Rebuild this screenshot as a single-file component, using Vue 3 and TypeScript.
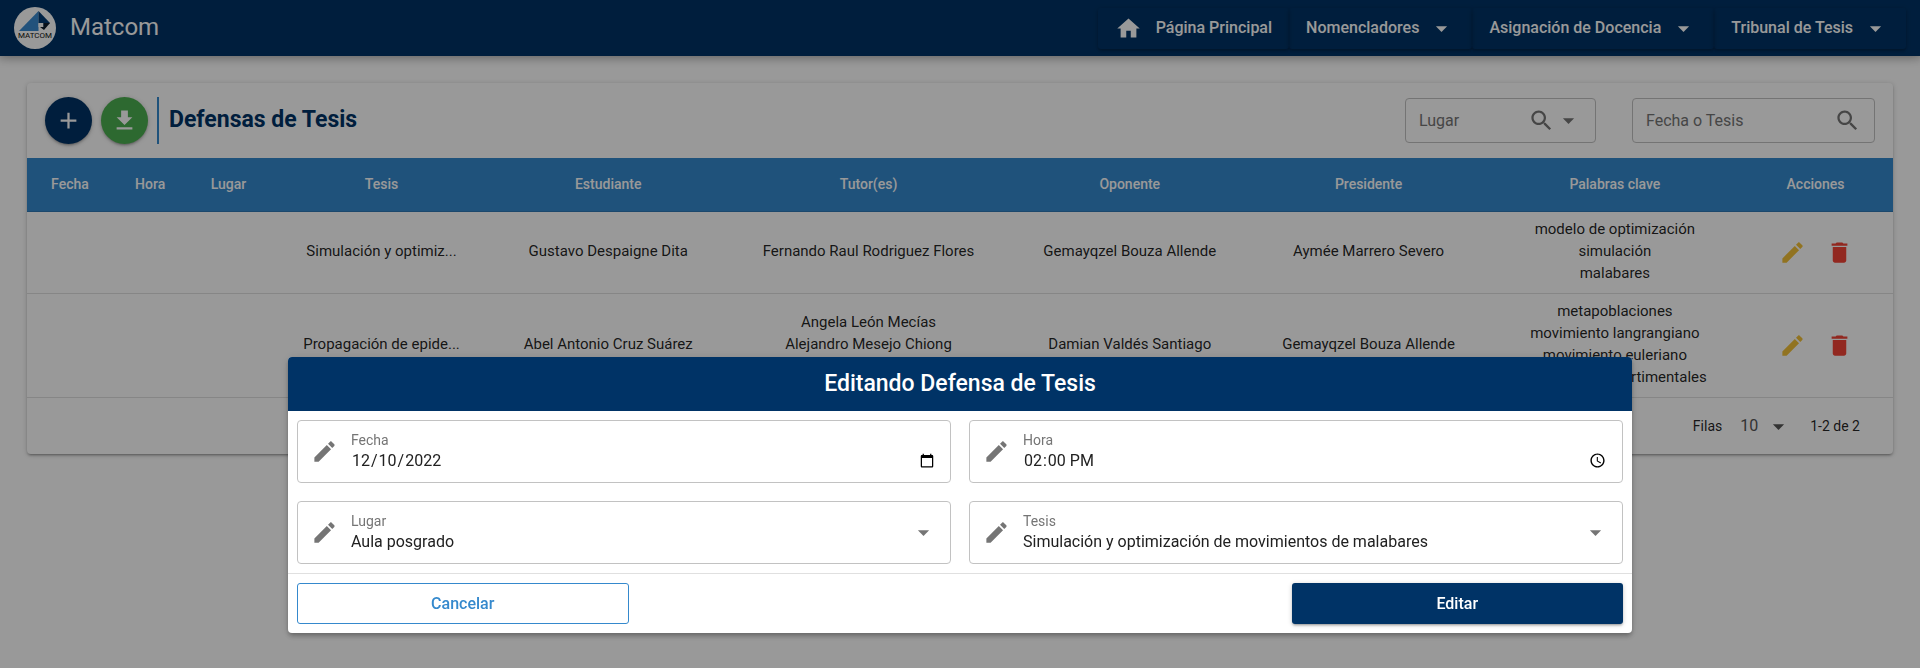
<script setup lang="ts">
import { ref } from 'vue'

interface Defensa {
  fecha: string
  hora: string
  lugar: string
  tesis: string
  estudiante: string
  tutores: string[]
  oponente: string
  presidente: string
  claves: string[]
}

const menus = ['Nomencladores', 'Asignación de Docencia', 'Tribunal de Tesis']

const columnas = [
  { nombre: 'Fecha', clase: 'c-fecha' },
  { nombre: 'Hora', clase: 'c-hora' },
  { nombre: 'Lugar', clase: 'c-lugar' },
  { nombre: 'Tesis', clase: 'c-tesis' },
  { nombre: 'Estudiante', clase: 'c-estudiante' },
  { nombre: 'Tutor(es)', clase: 'c-tutores' },
  { nombre: 'Oponente', clase: 'c-oponente' },
  { nombre: 'Presidente', clase: 'c-presidente' },
  { nombre: 'Palabras clave', clase: 'c-claves' },
  { nombre: 'Acciones', clase: 'c-acciones' },
]

const defensas: Defensa[] = [
  {
    fecha: '',
    hora: '',
    lugar: '',
    tesis: 'Simulación y optimiz...',
    estudiante: 'Gustavo Despaigne Dita',
    tutores: ['Fernando Raul Rodriguez Flores'],
    oponente: 'Gemayqzel Bouza Allende',
    presidente: 'Aymée Marrero Severo',
    claves: ['modelo de optimización', 'simulación', 'malabares'],
  },
  {
    fecha: '',
    hora: '',
    lugar: '',
    tesis: 'Propagación de epide...',
    estudiante: 'Abel Antonio Cruz Suárez',
    tutores: ['Angela León Mecías', 'Alejandro Mesejo Chiong', ''],
    oponente: 'Damian Valdés Santiago',
    presidente: 'Gemayqzel Bouza Allende',
    claves: ['metapoblaciones', 'movimiento langrangiano', 'movimiento euleriano', 'modelos compartimentales'],
  },
]

const filtroLugar = ref('')
const busqueda = ref('')
const filas = ref('10')
const fecha = ref('2022-12-10')
const hora = ref('14:00')
const lugar = ref('Aula posgrado')
const tesis = ref('Simulación y optimización de movimientos de malabares')

const lapiz =
  'M3 17.25V21h3.75L17.81 9.94l-3.75-3.75L3 17.25zM20.71 7.04c.39-.39.39-1.02 0-1.41l-2.34-2.34c-.39-.39-1.02-.39-1.41 0l-1.83 1.83 3.75 3.75 1.83-1.83z'
const papelera = 'M6 19c0 1.1.9 2 2 2h8c1.1 0 2-.9 2-2V7H6v12zM19 4h-3.5l-1-1h-5l-1 1H5v2h14V4z'
const flecha = 'M7 10l5 5 5-5z'
const lupa =
  'M15.5 14h-.79l-.28-.27C15.41 12.59 16 11.11 16 9.5 16 5.91 13.09 3 9.5 3S3 5.91 3 9.5 5.91 16 9.5 16c1.61 0 3.09-.59 4.23-1.57l.27.28v.79l5 4.99L20.49 19l-4.99-5zm-6 0C7.01 14 5 11.99 5 9.5S7.01 5 9.5 5 14 7.01 14 9.5 11.99 14 9.5 14z'
</script>

<template>
  <div class="page">
    <header class="topbar">
      <svg class="logo" viewBox="0 0 42 42" role="img" aria-label="Matcom">
        <circle cx="21" cy="21" r="21" fill="#fff" />
        <path d="M5 24L24.5 4v20z" fill="#3a89cf" />
        <path d="M24.5 4L36 16l-6.500 4-5-4z" fill="#003a73" />
        <path d="M24.5 16h5v4h-5z" fill="#fff" />
        <path d="M29.5 16H36l-6 7-4-3h3.500z" fill="#0a1a2c" />
        <text x="21" y="31" text-anchor="middle" class="logo-text">MATCOM</text>
      </svg>
      <span class="brand">Matcom</span>
      <nav class="nav">
        <a class="nav-item" href="#">
          <svg class="icon" viewBox="0 0 24 24"><path d="M10 20v-6h4v6h5v-8h3L12 3 2 12h3v8z" /></svg>
          <span class="nav-home">Página Principal</span>
        </a>
        <button v-for="m in menus" :key="m" type="button" class="nav-item">
          {{ m }}
          <svg class="icon nav-arrow" viewBox="0 0 24 24"><path :d="flecha" /></svg>
        </button>
      </nav>
    </header>

    <main class="card">
      <div class="card-top">
        <button type="button" class="round add" aria-label="Adicionar">
          <svg class="icon" viewBox="0 0 24 24"><path d="M19 13h-6v6h-2v-6H5v-2h6V5h2v6h6v2z" /></svg>
        </button>
        <button type="button" class="round download" aria-label="Descargar">
          <svg class="icon" viewBox="0 0 24 24"><path d="M19 9h-4V3H9v6H5l7 7 7-7zM5 18v2h14v-2H5z" /></svg>
        </button>
        <h1 class="title">Defensas de Tesis</h1>
        <div class="filters">
          <div class="filter filter-place">
            <select v-model="filtroLugar" aria-label="Lugar">
              <option value="">Lugar</option>
              <option>Aula posgrado</option>
            </select>
            <svg class="icon" viewBox="0 0 24 24"><path :d="lupa" /></svg>
            <svg class="icon" viewBox="0 0 24 24"><path :d="flecha" /></svg>
          </div>
          <div class="filter filter-text">
            <input v-model="busqueda" type="text" placeholder="Fecha o Tesis" aria-label="Fecha o Tesis" />
            <svg class="icon" viewBox="0 0 24 24"><path :d="lupa" /></svg>
          </div>
        </div>
      </div>

      <table class="table">
        <colgroup>
          <col v-for="c in columnas" :key="c.nombre" :class="c.clase" />
        </colgroup>
        <thead>
          <tr>
            <th v-for="c in columnas" :key="c.nombre" scope="col">{{ c.nombre }}</th>
          </tr>
        </thead>
        <tbody>
          <tr v-for="d in defensas" :key="d.tesis">
            <td>{{ d.fecha }}</td>
            <td>{{ d.hora }}</td>
            <td>{{ d.lugar }}</td>
            <td>{{ d.tesis }}</td>
            <td>{{ d.estudiante }}</td>
            <td><div v-for="t in d.tutores" :key="t" class="line">{{ t }}</div></td>
            <td>{{ d.oponente }}</td>
            <td>{{ d.presidente }}</td>
            <td><div v-for="k in d.claves" :key="k" class="line">{{ k }}</div></td>
            <td>
              <div class="actions">
                <button type="button" class="action edit" aria-label="Editar">
                  <svg class="icon" viewBox="0 0 24 24"><path :d="lapiz" /></svg>
                </button>
                <button type="button" class="action remove" aria-label="Eliminar">
                  <svg class="icon" viewBox="0 0 24 24"><path :d="papelera" /></svg>
                </button>
              </div>
            </td>
          </tr>
        </tbody>
      </table>

      <div class="pager">
        <label for="filas">Filas</label>
        <div class="rows">
          <select id="filas" v-model="filas">
            <option>10</option>
            <option>20</option>
          </select>
          <svg class="icon" viewBox="0 0 24 24"><path :d="flecha" /></svg>
        </div>
        <span>1-2 de 2</span>
      </div>
    </main>

    <div class="backdrop">
      <form class="dialog" role="dialog" aria-labelledby="dialog-title" @submit.prevent>
        <h2 id="dialog-title" class="dialog-title">Editando Defensa de Tesis</h2>
        <div class="fields">
          <div class="field">
            <svg class="icon" viewBox="0 0 24 24"><path :d="lapiz" /></svg>
            <div class="control">
              <label for="f-fecha">Fecha</label>
              <input id="f-fecha" v-model="fecha" type="date" />
            </div>
          </div>
          <div class="field">
            <svg class="icon" viewBox="0 0 24 24"><path :d="lapiz" /></svg>
            <div class="control">
              <label for="f-hora">Hora</label>
              <input id="f-hora" v-model="hora" type="time" />
            </div>
          </div>
          <div class="field">
            <svg class="icon" viewBox="0 0 24 24"><path :d="lapiz" /></svg>
            <div class="control">
              <label for="f-lugar">Lugar</label>
              <select id="f-lugar" v-model="lugar">
                <option>Aula posgrado</option>
              </select>
            </div>
            <svg class="icon" viewBox="0 0 24 24"><path :d="flecha" /></svg>
          </div>
          <div class="field">
            <svg class="icon" viewBox="0 0 24 24"><path :d="lapiz" /></svg>
            <div class="control">
              <label for="f-tesis">Tesis</label>
              <select id="f-tesis" v-model="tesis">
                <option>Simulación y optimización de movimientos de malabares</option>
              </select>
            </div>
            <svg class="icon" viewBox="0 0 24 24"><path :d="flecha" /></svg>
          </div>
        </div>
        <div class="dialog-actions">
          <button type="button" class="btn cancel">Cancelar</button>
          <button type="submit" class="btn submit">Editar</button>
        </div>
      </form>
    </div>
  </div>
</template>

<style>
body {
  margin: 0;
  background: #fff;
}
</style>

<style scoped>
* {
  box-sizing: border-box;
}
.page {
  min-height: 100vh;
  font-family: Roboto, "Liberation Sans", sans-serif;
  font-size: 15px;
  line-height: 22px;
  color: rgba(0, 0, 0, 0.87);
}
button,
input,
select {
  font: inherit;
  color: inherit;
  border: 0;
  margin: 0;
  padding: 0;
  background: transparent;
  outline: none;
  border-radius: 0;
}
button {
  cursor: pointer;
}
select {
  appearance: none;
  min-width: 0;
}
.icon {
  width: 27px;
  height: 27px;
  flex: none;
  fill: currentColor;
  pointer-events: none;
}

.topbar {
  display: flex;
  align-items: center;
  height: 56px;
  padding: 0 14px;
  color: #fff;
  background: #036;
  box-shadow: 0 0 10px 2px rgba(0, 0, 0, 0.2), 0 0 10px rgba(0, 0, 0, 0.24);
}
.logo {
  width: 42px;
  height: 42px;
}
.logo-text {
  font-size: 8px;
  fill: #111;
}
.brand {
  margin-left: 14px;
  padding-bottom: 2px;
  font-size: 24px;
  line-height: 28px;
}
.nav {
  display: flex;
  margin-left: auto;
}
.nav-item {
  display: flex;
  align-items: center;
  height: 41px;
  padding: 0 17px;
  font-size: 16px;
  font-weight: 500;
  color: #fff;
  text-decoration: none;
  border-radius: 3px;
  box-shadow: 0 1px 5px rgba(0, 0, 0, 0.2), 0 2px 2px rgba(0, 0, 0, 0.14);
}
.nav-home {
  margin-left: 14px;
}
.nav-arrow {
  margin-left: 9px;
}

.card {
  margin: 27px;
  border-radius: 4px;
  background: #fff;
  box-shadow: 0 1px 5px rgba(0, 0, 0, 0.2), 0 2px 2px rgba(0, 0, 0, 0.14), 0 3px 1px -2px rgba(0, 0, 0, 0.12);
}
.card-top {
  display: flex;
  align-items: center;
  padding: 14px 18px;
}
.round {
  display: flex;
  align-items: center;
  justify-content: center;
  width: 47px;
  height: 47px;
  margin-right: 9px;
  border-radius: 50%;
  color: #fff;
  box-shadow: 0 1px 5px rgba(0, 0, 0, 0.2), 0 2px 2px rgba(0, 0, 0, 0.14), 0 3px 1px -2px rgba(0, 0, 0, 0.12);
}
.add {
  background: #036;
}
.download {
  background: #4caf50;
}
.title {
  margin: 0;
  padding: 0 0 2px 10px;
  border-left: 2px solid #3589cd;
  font-size: 23px;
  line-height: 45px;
  font-weight: 700;
  color: #036;
}
.filters {
  display: flex;
  gap: 36px;
  margin-left: auto;
}
.filter {
  display: flex;
  align-items: center;
  height: 45px;
  padding: 0 13px;
  border: 1px solid #c2c2c2;
  border-radius: 4px;
  color: #757575;
  font-size: 16px;
}
.filter-place {
  width: 191px;
}
.filter-text {
  width: 243px;
}
.filter select,
.filter input {
  flex: 1;
  min-width: 0;
  height: 43px;
}
.filter input::placeholder {
  color: #757575;
  opacity: 1;
}

.table {
  width: 100%;
  table-layout: fixed;
  border-collapse: separate;
  border-spacing: 0;
  text-align: center;
}
.c-fecha { width: 4.6%; }
.c-hora { width: 4%; }
.c-lugar { width: 4.4%; }
.c-tesis { width: 12%; }
.c-estudiante { width: 12.3%; }
.c-tutores { width: 15.6%; }
.c-oponente { width: 12.4%; }
.c-presidente { width: 13.2%; }
.c-claves { width: 13.2%; }
.c-acciones { width: 8.3%; }
th {
  height: 54px;
  padding: 0 0 2px;
  border-bottom: 1px solid #2f78b4;
  background: #3589cd;
  color: #fff;
  font-size: 14px;
  font-weight: 500;
}
td {
  padding: 6px 0 9px;
  border-bottom: 1px solid #dfdfdf;
}
.line {
  min-height: 22px;
}
.actions {
  display: flex;
  justify-content: center;
  gap: 20px;
  padding-top: 2px;
}
.action {
  display: flex;
}
.edit {
  color: #f2c037;
}
.remove {
  color: #f44336;
}

.pager {
  display: flex;
  align-items: center;
  justify-content: flex-end;
  height: 56px;
  padding-right: 33px;
  font-size: 14px;
}
.rows {
  display: flex;
  align-items: center;
  margin: 0 18px;
  font-size: 16px;
  color: #555;
}
.rows select {
  width: 25px;
}

.backdrop {
  position: fixed;
  inset: 0;
  display: flex;
  align-items: flex-end;
  justify-content: center;
  padding-bottom: 35px;
  background: rgba(0, 0, 0, 0.4);
}
.dialog {
  width: 70%;
  overflow: hidden;
  border-radius: 4px;
  background: #fff;
  box-shadow: 0 2px 4px -1px rgba(0, 0, 0, 0.2), 0 4px 5px rgba(0, 0, 0, 0.14), 0 1px 10px rgba(0, 0, 0, 0.12);
}
.dialog-title {
  margin: 0;
  font-size: 23px;
  font-weight: 500;
  line-height: 54px;
  text-align: center;
  color: #fff;
  background: #036;
}
.fields {
  display: grid;
  grid-template-columns: 1fr 1fr;
  gap: 18px;
  padding: 9px;
}
.field {
  display: flex;
  align-items: center;
  height: 63px;
  padding: 0 13px;
  border: 1px solid #c2c2c2;
  border-radius: 4px;
  color: #757575;
}
.control {
  display: flex;
  flex: 1;
  flex-direction: column;
  min-width: 0;
  margin-left: 13px;
  padding-bottom: 2px;
}
.control label {
  font-size: 14px;
  line-height: 20px;
}
.control input,
.control select {
  width: 100%;
  height: 22px;
  font-size: 16px;
  color: #212121;
}
.dialog-actions {
  display: flex;
  justify-content: space-between;
  padding: 9px;
  border-top: 1px solid #e0e0e0;
}
.btn {
  width: 25%;
  height: 41px;
  border-radius: 3px;
  font-size: 16px;
  font-weight: 500;
}
.cancel {
  border: 1px solid #3589cd;
  color: #3589cd;
}
.submit {
  background: #036;
  color: #fff;
  box-shadow: 0 1px 5px rgba(0, 0, 0, 0.2), 0 2px 2px rgba(0, 0, 0, 0.14), 0 3px 1px -2px rgba(0, 0, 0, 0.12);
}
</style>
